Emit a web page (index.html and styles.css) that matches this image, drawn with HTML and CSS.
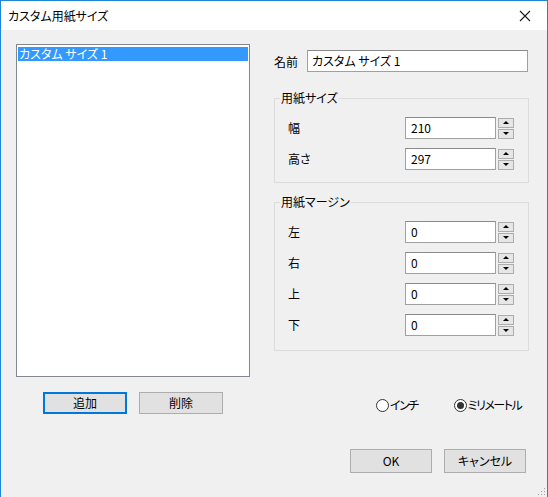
FILE: index.html
```html
<!DOCTYPE html>
<html lang="ja">
<head>
<meta charset="utf-8">
<title>カスタム用紙サイズ</title>
<link rel="stylesheet" href="styles.css">
</head>
<body>
<div class="window">
  <div class="titlebar">
    <span class="title">カスタム用紙サイズ</span>
    <span class="close"><svg width="12" height="12" viewBox="0 0 12 12"><path d="M1 1L11 11M11 1L1 11" stroke="#1a1a1a" stroke-width="1.1" fill="none"/></svg></span>
  </div>
  <div class="content">
    <div class="left">
      <div class="list">
        <div class="item selected">カスタム サイズ 1</div>
      </div>
      <div class="list-buttons">
        <button class="btn default">追加</button>
        <button class="btn">削除</button>
      </div>
    </div>
    <div class="right">
      <div class="name-row">
        <span class="name-label">名前</span>
        <div class="textbox wide">カスタム サイズ 1</div>
      </div>
      <fieldset class="group g1">
        <legend>用紙サイズ</legend>
        <div class="rows">
          <div class="row"><span class="lbl">幅</span><div class="textbox num">210</div><div class="spin"><span class="up"></span><span class="down"></span></div></div>
          <div class="row"><span class="lbl">高さ</span><div class="textbox num">297</div><div class="spin"><span class="up"></span><span class="down"></span></div></div>
        </div>
      </fieldset>
      <fieldset class="group g2">
        <legend>用紙マージン</legend>
        <div class="rows">
          <div class="row"><span class="lbl">左</span><div class="textbox num">0</div><div class="spin"><span class="up"></span><span class="down"></span></div></div>
          <div class="row"><span class="lbl">右</span><div class="textbox num">0</div><div class="spin"><span class="up"></span><span class="down"></span></div></div>
          <div class="row"><span class="lbl">上</span><div class="textbox num">0</div><div class="spin"><span class="up"></span><span class="down"></span></div></div>
          <div class="row"><span class="lbl">下</span><div class="textbox num">0</div><div class="spin"><span class="up"></span><span class="down"></span></div></div>
        </div>
      </fieldset>
      <div class="radios">
        <label class="radio"><span class="circle"></span>インチ</label>
        <label class="radio checked"><span class="circle"></span>ミリメートル</label>
      </div>
      <div class="dialog-buttons">
        <button class="btn wide-btn">OK</button>
        <button class="btn wide-btn">キャンセル</button>
      </div>
    </div>
  </div>
  <svg class="grip" width="10" height="10" viewBox="0 0 10 10">
    <rect x="8" y="2" width="1" height="1" fill="#a0a0a0"/>
    <rect x="5" y="5" width="1" height="1" fill="#a0a0a0"/>
    <rect x="8" y="5" width="1" height="1" fill="#a0a0a0"/>
    <rect x="2" y="8" width="1" height="1" fill="#a0a0a0"/>
    <rect x="5" y="8" width="1" height="1" fill="#a0a0a0"/>
    <rect x="8" y="8" width="1" height="1" fill="#a0a0a0"/>
  </svg>
</div>
</body>
</html>
```
FILE: styles.css
```css
html, body {
  margin: 0;
  padding: 0;
  background: #f0f0f0;
}
body {
  font-family: "Noto Sans CJK JP", "Noto Sans", sans-serif;
  font-size: 12px;
  color: #000;
  font-feature-settings: "palt";
}
.window {
  position: relative;
  width: 548px;
  height: 497px;
  box-sizing: border-box;
  border: 1px solid #1c87d6;
  border-bottom: none;
  background: #f0f0f0;
  display: flex;
  flex-direction: column;
}
.titlebar {
  height: 29px;
  background: #fff;
  display: flex;
  align-items: center;
  padding-left: 7px;
  flex: none;
}
.title {
  font-size: 12px;
  line-height: 16px;
}
.close {
  margin-left: auto;
  width: 44px;
  height: 29px;
  display: flex;
  align-items: center;
  justify-content: center;
}
.content {
  display: flex;
  padding: 14px 0 0 15px;
  gap: 24px;
}
.left {
  width: 234px;
  display: flex;
  flex-direction: column;
}
.list {
  height: 333px;
  box-sizing: border-box;
  border: 1px solid #828790;
  background: #fff;
  padding: 2px 1px;
}
.item {
  height: 14px;
  line-height: 14px;
  padding-left: 1px;
  white-space: nowrap;
}
.item.selected {
  background: #3399ff;
  color: #fff;
}
.list-buttons {
  display: flex;
  justify-content: center;
  gap: 12px;
  margin-top: 15px;
}
.btn {
  font-family: inherit;
  font-size: 12px;
  font-feature-settings: "palt";
  width: 84px;
  height: 22px;
  box-sizing: border-box;
  background: #e1e1e1;
  border: 1px solid #adadad;
  padding: 0;
  color: #000;
  line-height: 18px;
}
.btn.default {
  border: 1px solid #0078d7;
  box-shadow: inset 0 0 0 1px #0078d7;
}
.right {
  width: 255px;
  display: flex;
  flex-direction: column;
}
.name-row {
  margin-top: 6px;
  display: flex;
  align-items: center;
}
.name-label {
  width: 33px;
}
.textbox {
  height: 22px;
  box-sizing: border-box;
  background: #fff;
  border: 1px solid #a0a0a0;
  border-top-color: #8a8a8a;
  padding: 0 4px;
  line-height: 20px;
  white-space: nowrap;
}
.textbox.wide {
  width: 221px;
}
.group {
  margin: 0;
  min-width: 0;
  box-sizing: border-box;
  width: 255px;
  border: 1px solid #dcdcdc;
  padding: 11px 0 12px 0;
}
.group legend {
  margin-left: 5px;
  padding: 0 1px;
  line-height: 16px;
}
.g1 {
  margin-top: 18px;
}
.g2 {
  margin-top: 11px;
  padding-bottom: 14px;
}
.rows {
  display: flex;
  flex-direction: column;
  gap: 9px;
  padding-left: 13px;
}
.row {
  display: flex;
  align-items: center;
}
.lbl {
  width: 117px;
  padding-top: 1px;
  margin-top: -3px;
}
.textbox.num {
  width: 91px;
  padding-left: 5px;
}
.spin {
  margin-left: 2px;
  display: flex;
  flex-direction: column;
  gap: 1px;
}
.spin span {
  width: 16px;
  height: 10px;
  box-sizing: border-box;
  border: 1px solid #adadad;
  background: #e6e6e6;
  display: flex;
  align-items: center;
  justify-content: center;
}
.spin .up::before {
  content: "";
  border-left: 3px solid transparent;
  border-right: 3px solid transparent;
  border-bottom: 3px solid #000;
}
.spin .down::before {
  content: "";
  border-left: 3px solid transparent;
  border-right: 3px solid transparent;
  border-top: 3px solid #000;
}
.radios {
  margin-top: 46px;
  display: flex;
  padding-left: 102px;
  height: 16px;
  align-items: center;
}
.radio {
  display: flex;
  align-items: center;
  line-height: 16px;
  white-space: nowrap;
  flex: none;
  letter-spacing: -1.5px;
}
.radio + .radio {
  margin-left: 36px;
}
.circle {
  width: 13px;
  height: 13px;
  flex: none;
  box-sizing: border-box;
  border: 1px solid #333;
  border-radius: 50%;
  background: #fff;
  margin-right: 1px;
  display: flex;
  align-items: center;
  justify-content: center;
}
.radio.checked .circle::before {
  content: "";
  width: 7px;
  height: 7px;
  border-radius: 50%;
  background: #333;
}
.dialog-buttons {
  margin-top: 36px;
  display: flex;
  justify-content: flex-end;
  gap: 12px;
  padding-right: 3px;
}
.btn.wide-btn {
  width: 82px;
  height: 24px;
}
.grip {
  position: absolute;
  right: 1px;
  bottom: 1px;
}
```
